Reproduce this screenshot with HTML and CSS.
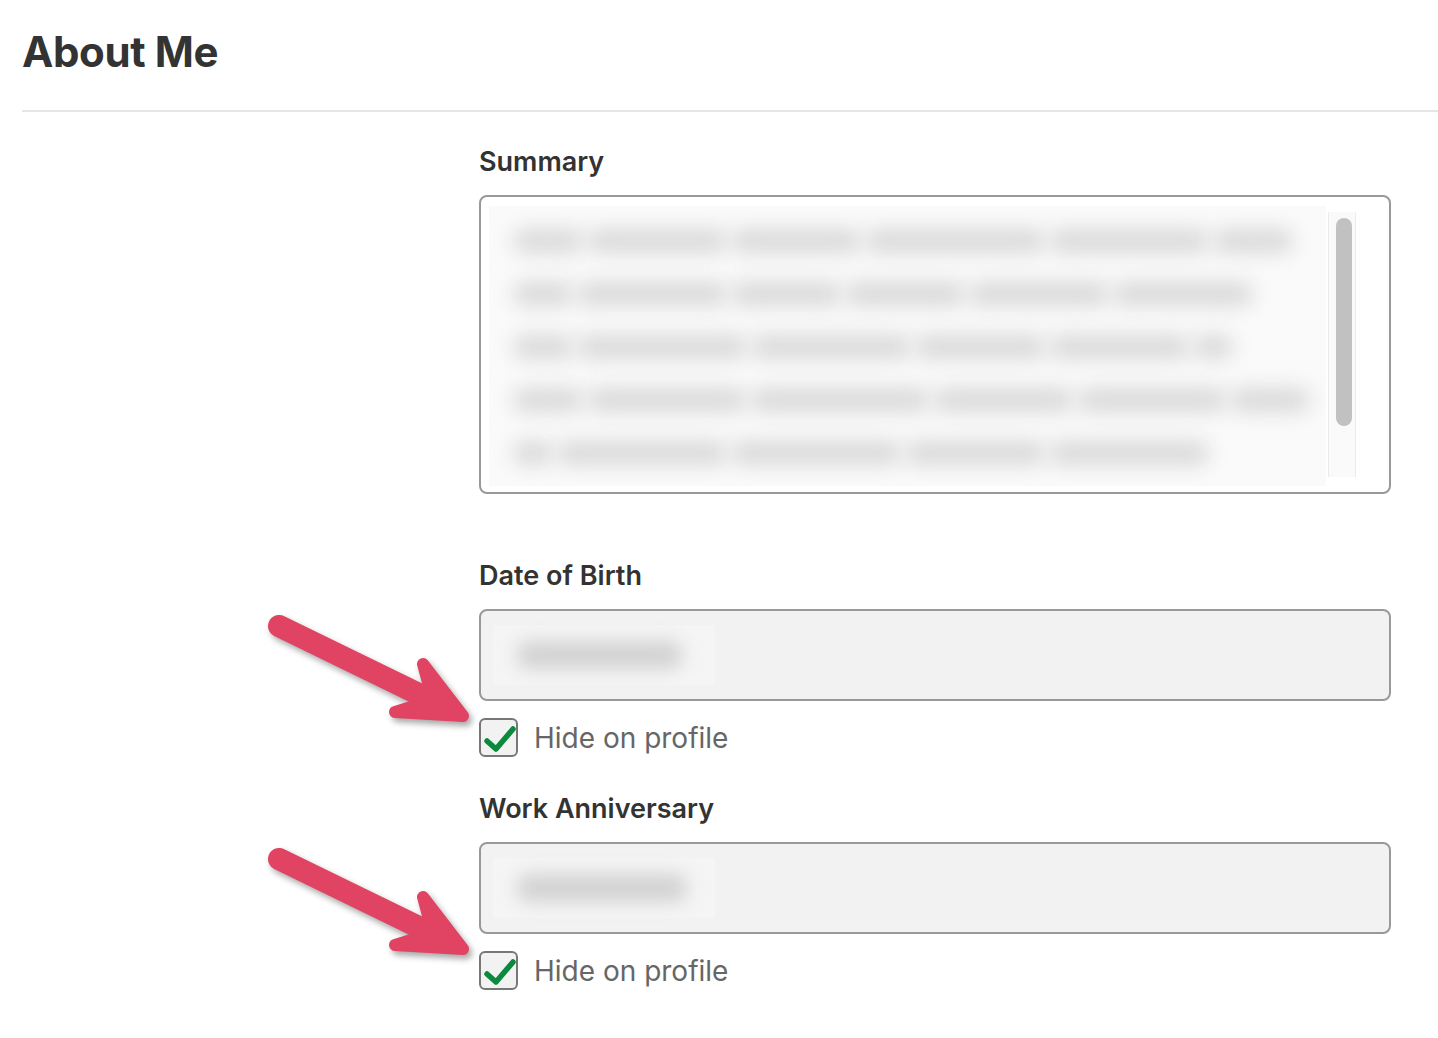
FILE: index.html
```html
<!DOCTYPE html>
<html lang="en">
<head>
  <meta charset="UTF-8">
  <title>About Me</title>
  <link rel="stylesheet" href="styles.css">
</head>
<body>
  <header class="page-head">
    <h1>About Me</h1>
  </header>

  <form class="about-form">
    <div class="field">
      <label class="field-label">Summary</label>
      <div class="summary-box">
        <div class="summary-text">
          <div class="blur-line"><span style="width:70px"></span><span style="width:140px"></span><span style="width:130px"></span><span style="width:180px"></span><span style="width:160px"></span><span style="width:80px"></span></div>
          <div class="blur-line"><span style="width:60px"></span><span style="width:150px"></span><span style="width:110px"></span><span style="width:120px"></span><span style="width:140px"></span><span style="width:140px"></span></div>
          <div class="blur-line"><span style="width:60px"></span><span style="width:170px"></span><span style="width:160px"></span><span style="width:130px"></span><span style="width:140px"></span><span style="width:40px"></span></div>
          <div class="blur-line"><span style="width:70px"></span><span style="width:160px"></span><span style="width:180px"></span><span style="width:140px"></span><span style="width:150px"></span><span style="width:80px"></span></div>
          <div class="blur-line"><span style="width:40px"></span><span style="width:170px"></span><span style="width:170px"></span><span style="width:140px"></span><span style="width:160px"></span></div>
        </div>
        <div class="scroll-track"><div class="scroll-thumb"></div></div>
      </div>
    </div>

    <div class="field field-date">
      <label class="field-label">Date of Birth</label>
      <div class="date-box">
        <div class="date-value"><span style="width:165px"></span></div>
      </div>
      <div class="check-row">
        <svg class="arrow" width="210" height="125" viewBox="0 0 210 125">
          <line x1="10" y1="18" x2="168" y2="95" />
          <polygon points="154,56 194,108 126,104 158,94 161,82" />
        </svg>
        <span class="check-box">
          <svg width="35" height="35" viewBox="0 0 35 35"><path d="M6 21 L15 29 L32 9" /></svg>
        </span>
        <span class="check-text">Hide on profile</span>
      </div>
    </div>

    <div class="field field-date">
      <label class="field-label">Work Anniversary</label>
      <div class="date-box">
        <div class="date-value"><span style="width:170px"></span></div>
      </div>
      <div class="check-row">
        <svg class="arrow" width="210" height="125" viewBox="0 0 210 125">
          <line x1="10" y1="18" x2="168" y2="95" />
          <polygon points="154,56 194,108 126,104 158,94 161,82" />
        </svg>
        <span class="check-box">
          <svg width="35" height="35" viewBox="0 0 35 35"><path d="M6 21 L15 29 L32 9" /></svg>
        </span>
        <span class="check-text">Hide on profile</span>
      </div>
    </div>
  </form>
</body>
</html>
```

FILE: styles.css
```css
body {
  margin: 0;
  font-family: Inter, "Liberation Sans", sans-serif;
  color: #333;
  background: #fff;
}
.page-head {
  margin-left: 22px;
  border-bottom: 2px solid #e6e6e6;
  padding: 24px 0 30px;
}
h1 {
  margin: 0;
  font-size: 42px;
  line-height: 56px;
  font-weight: 700;
  letter-spacing: -0.4px;
  color: #333;
}
.about-form {
  width: 912px;
  margin-left: 479px;
  padding-top: 32px;
}
.field-label {
  display: block;
  font-size: 27px;
  line-height: 36px;
  font-weight: 600;
  color: #333;
  margin-bottom: 15px;
}
.summary-box {
  border: 2px solid #999;
  border-radius: 8px;
  box-sizing: border-box;
  height: 299px;
  display: flex;
  padding: 9px 33px 6px 8px;
  gap: 2px;
}
.summary-text {
  flex: 1;
  background: #fafafa;
  padding: 23px 16px 0 24px;
  display: flex;
  flex-direction: column;
  gap: 29px;
  overflow: hidden;
}
.blur-line {
  display: flex;
  gap: 4px;
  height: 24px;
}
.blur-line span,
.date-value span {
  display: block;
  height: 24px;
  background: #d9d9d9;
  border-radius: 12px;
  filter: blur(10px);
}
.scroll-track {
  width: 28px;
  margin-top: 6px;
  margin-bottom: 9px;
  background: #fafafa;
  border-left: 1px solid #ebebeb;
  border-right: 1px solid #ebebeb;
  padding: 6px 0 0 7px;
  box-sizing: border-box;
}
.scroll-thumb {
  width: 16px;
  height: 208px;
  background: #c1c1c1;
  border-radius: 8px;
}
.field-date {
  margin-top: 64px;
}
.field-date + .field-date {
  margin-top: 34px;
}
.date-box {
  height: 92px;
  box-sizing: border-box;
  border: 2px solid #999;
  border-radius: 8px;
  background: #f2f2f2;
  padding: 14px 12px;
}
.date-value {
  height: 60px;
  width: 222px;
  background: #f5f5f5;
  display: flex;
  align-items: center;
  padding-left: 24px;
  box-sizing: border-box;
}
.date-value span {
  height: 28px;
  filter: blur(9px);
  background: #d2d2d2;
}
.check-row {
  position: relative;
  display: flex;
  align-items: center;
  gap: 16px;
  margin-top: 16px;
  height: 40px;
}
.arrow {
  position: absolute;
  left: -210px;
  top: -109px;
  overflow: visible;
  filter: drop-shadow(3px 4px 3px rgba(0, 0, 0, 0.35));
}
.arrow line {
  stroke: #e04462;
  stroke-width: 22;
  stroke-linecap: round;
}
.arrow polygon {
  fill: #e04462;
  stroke: #e04462;
  stroke-width: 12;
  stroke-linejoin: round;
}
.check-box {
  width: 39px;
  height: 39px;
  box-sizing: border-box;
  border: 2px solid #777;
  border-radius: 6px;
  background: #f2f2f2;
  display: flex;
  align-items: center;
  justify-content: center;
}
.check-box path {
  fill: none;
  stroke: #0b8a3e;
  stroke-width: 5.5;
  stroke-linecap: round;
  stroke-linejoin: round;
}
.check-text {
  font-size: 28px;
  color: #666;
  line-height: 40px;
  padding-top: 2px;
}
```
